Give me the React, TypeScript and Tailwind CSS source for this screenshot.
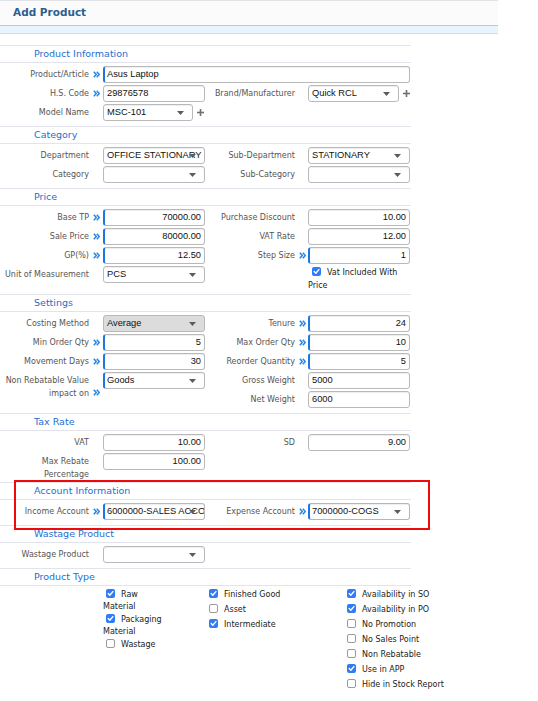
import React from "react";

const DJ = "font-['DejaVu_Sans',sans-serif]";
const LS = "font-['Liberation_Sans',Arial,sans-serif]";

function Tri() {
  return (
    <svg width="7" height="4" viewBox="0 0 7 4" className="absolute right-[8px] top-[6px]">
      <path d="M0 0H7L3.5 4Z" fill="#5c5c5c" />
    </svg>
  );
}

function Plus() {
  return (
    <svg width="7" height="7" viewBox="0 0 7 7" className="ml-[4px] mt-[5px] shrink-0">
      <rect x="2.7" y="0" width="1.6" height="7" fill="#707070" />
      <rect x="0" y="2.7" width="7" height="1.6" fill="#707070" />
    </svg>
  );
}

type FieldProps = {
  value?: string;
  right?: boolean;
  req?: boolean;
  select?: boolean;
  gray?: boolean;
  focus?: boolean;
  w?: string;
};

function Field({ value = "", right, req, select, gray, focus, w = "w-[102px]" }: FieldProps) {
  const cls = [
    "relative h-[17px] shrink-0 rounded-[3px] border flex items-center overflow-hidden whitespace-nowrap pr-[3px]",
    LS,
    "text-[9.3px] text-[#111]",
    w,
    focus ? "border-[#94bbea]" : "border-[#b9b9b9]",
    req ? "border-l-2 border-l-[#1b78e2] pl-[2px]" : "pl-[3px]",
    right ? "justify-end" : "justify-start",
    gray ? "bg-[#dcdcdc]" : "bg-white shadow-[inset_0_1px_1px_rgba(0,0,0,0.07)]",
  ].join(" ");
  return (
    <div className={cls}>
      <span>{value}</span>
      {select ? <Tri /> : null}
    </div>
  );
}

function Chev() {
  return (
    <svg width="7" height="7" viewBox="0 0 7 7" className="inline-block">
      <path d="M0.8 0.8L3.3 3.5L0.8 6.2M3.8 0.8L6.3 3.5L3.8 6.2" stroke="#2584e4" strokeWidth="1.5" fill="none" />
    </svg>
  );
}

function Row({
  label,
  req,
  right,
  chevLow,
  children,
}: {
  label: React.ReactNode;
  req?: boolean;
  right?: boolean;
  chevLow?: boolean;
  children: React.ReactNode;
}) {
  return (
    <div className="flex items-start">
      <div
        className={[
          right ? "w-[91px]" : "w-[90px]",
          "shrink-0 text-right pr-[1px] pt-[3px] leading-[12.5px] text-[8px] text-[#555]",
          DJ,
        ].join(" ")}
      >
        {label}
      </div>
      <div
        className={[
          right ? "w-[12px]" : "w-[13px]",
          "shrink-0 flex justify-center",
          chevLow ? "pt-[17px]" : "pt-[5px]",
        ].join(" ")}
      >
        {req ? <Chev /> : null}
      </div>
      {children}
    </div>
  );
}

function Section({
  title,
  children,
  body = "pt-[3px] pb-[5px]",
  top,
}: {
  title: string;
  children?: React.ReactNode;
  body?: string;
  top?: boolean;
}) {
  return (
    <div className={["border-b border-[#e3e3eb]", top ? "border-t" : ""].join(" ")}>
      <div
        className={[
          "h-[17px] border-b border-[#e3e3eb] pl-[34px] flex items-center text-[9.5px] text-[#1d6fd1]",
          DJ,
        ].join(" ")}
      >
        {title}
      </div>
      <div className={body}>{children}</div>
    </div>
  );
}

function Cols({ left, right }: { left: React.ReactNode; right?: React.ReactNode }) {
  return (
    <div className="flex">
      <div className="w-[205px] flex flex-col gap-[2px]">{left}</div>
      <div className="w-[205px] flex flex-col gap-[2px]">{right}</div>
    </div>
  );
}

function Box({ on }: { on?: boolean }) {
  return on ? (
    <span className="inline-flex align-middle relative top-[-1px] w-[9px] h-[9px] rounded-[2px] bg-[#2f7cf6] items-center justify-center">
      <svg width="7" height="7" viewBox="0 0 7 7">
        <path d="M1.2 3.6L2.8 5.2L5.9 1.6" stroke="white" strokeWidth="1.4" fill="none" strokeLinecap="round" strokeLinejoin="round" />
      </svg>
    </span>
  ) : (
    <span className="inline-block align-middle relative top-[-1px] w-[9px] h-[9px] rounded-[2px] border border-[#9a9a9a] bg-white" />
  );
}

function Check({ on, children, ml = "ml-[3px]" }: { on?: boolean; children: React.ReactNode; ml?: string }) {
  return (
    <div className="whitespace-nowrap">
      <span className={ml}>
        <Box on={on} />
      </span>
      <span className="ml-[6px]">{children}</span>
    </div>
  );
}

export default function App() {
  return (
    <div className="relative w-[538px] min-h-[701px] bg-white overflow-hidden">
      <div className="w-[498px]">
        <div className="h-[26px] border-t border-[#dfe3e6] border-b border-b-[#c2c8cc] bg-[#fbfbfb] flex items-center pl-[13px]">
          <span className={[DJ, "font-bold text-[10.5px] text-[#2e5e8e]"].join(" ")}>Add Product</span>
        </div>
        <div className="h-[8px] bg-[#e6f5fb] border-b border-[#d4dde1]" />
      </div>
      <div className="h-[11px]" />

      <div className="w-[411px]">
        <Section title="Product Information" top>
          <div className="flex flex-col gap-[2px]">
            <Row label="Product/Article" req>
              <Field value="Asus Laptop" req w="w-[307px]" />
            </Row>
            <Cols
              left={
                <>
                  <Row label="H.S. Code" req>
                    <Field value="29876578" />
                  </Row>
                  <Row label="Model Name">
                    <Field value="MSC-101" select w="w-[90px]" />
                    <Plus />
                  </Row>
                </>
              }
              right={
                <Row label="Brand/Manufacturer" right>
                  <Field value="Quick RCL" select w="w-[91px]" />
                  <Plus />
                </Row>
              }
            />
          </div>
        </Section>

        <Section title="Category">
          <Cols
            left={
              <>
                <Row label="Department">
                  <Field value="OFFICE STATIONARY" select />
                </Row>
                <Row label="Category">
                  <Field select />
                </Row>
              </>
            }
            right={
              <>
                <Row label="Sub-Department" right>
                  <Field value="STATIONARY" select />
                </Row>
                <Row label="Sub-Category" right>
                  <Field select />
                </Row>
              </>
            }
          />
        </Section>

        <Section title="Price" body="pt-[3px] pb-[2px]">
          <Cols
            left={
              <>
                <Row label="Base TP" req>
                  <Field value="70000.00" right req />
                </Row>
                <Row label="Sale Price" req>
                  <Field value="80000.00" right req />
                </Row>
                <Row label="GP(%)" req>
                  <Field value="12.50" right req />
                </Row>
                <Row label="Unit of Measurement">
                  <Field value="PCS" select />
                </Row>
              </>
            }
            right={
              <>
                <Row label="Purchase Discount" right>
                  <Field value="10.00" right />
                </Row>
                <Row label="VAT Rate" right>
                  <Field value="12.00" right />
                </Row>
                <Row label="Step Size" req right>
                  <Field value="1" right req />
                </Row>
                <div className="flex">
                  <div className="w-[103px] shrink-0" />
                  <div className={[DJ, "text-[8px] leading-[13px] text-[#222]"].join(" ")}>
                    <Check on ml="ml-[4px]">
                      Vat Included With
                    </Check>
                    <div>Price</div>
                  </div>
                </div>
              </>
            }
          />
        </Section>

        <Section title="Settings">
          <Cols
            left={
              <>
                <Row label="Costing Method">
                  <Field value="Average" select gray />
                </Row>
                <Row label="Min Order Qty" req>
                  <Field value="5" right req />
                </Row>
                <Row label="Movement Days" req>
                  <Field value="30" right req />
                </Row>
                <Row
                  label={
                    <>
                      Non Rebatable Value
                      <br />
                      impact on
                    </>
                  }
                  req
                  chevLow
                >
                  <Field value="Goods" select req />
                </Row>
              </>
            }
            right={
              <>
                <Row label="Tenure" req right>
                  <Field value="24" right req />
                </Row>
                <Row label="Max Order Qty" req right>
                  <Field value="10" right req />
                </Row>
                <Row label="Reorder Quantity" req right>
                  <Field value="5" right req />
                </Row>
                <Row label="Gross Weight" right>
                  <Field value="5000" />
                </Row>
                <Row label="Net Weight" right>
                  <Field value="6000" />
                </Row>
              </>
            }
          />
        </Section>

        <Section title="Tax Rate" body="pt-[3px] pb-[1px]">
          <Cols
            left={
              <>
                <Row label="VAT">
                  <Field value="10.00" right />
                </Row>
                <Row
                  label={
                    <>
                      Max Rebate
                      <br />
                      Percentage
                    </>
                  }
                >
                  <Field value="100.00" right />
                </Row>
              </>
            }
            right={
              <Row label="SD" right>
                <Field value="9.00" right />
              </Row>
            }
          />
        </Section>

        <Section title="Account Information">
          <Cols
            left={
              <Row label="Income Account" req>
                <Field value="6000000-SALES ACCOUNT" select req />
              </Row>
            }
            right={
              <Row label="Expense Account" req right>
                <Field value="7000000-COGS" select req focus />
              </Row>
            }
          />
        </Section>

        <Section title="Wastage Product">
          <Cols
            left={
              <Row label="Wastage Product">
                <Field select />
              </Row>
            }
          />
        </Section>

        <div>
          <div
            className={[
              "h-[17px] border-b border-[#e3e3eb] pl-[34px] flex items-center text-[9.5px] text-[#1d6fd1]",
              DJ,
            ].join(" ")}
          >
            Product Type
          </div>
          <div className={["flex pl-[103px] text-[8px] text-[#222]", DJ].join(" ")}>
            <div className="w-[103px] shrink-0 pt-[3px] leading-[12.4px]">
              <Check on>Raw</Check>
              <div>Material</div>
              <Check on>Packaging</Check>
              <div>Material</div>
              <Check>Wastage</Check>
            </div>
            <div className="w-[138px] shrink-0 pt-[1px] leading-[15px]">
              <Check on>Finished Good</Check>
              <Check>Asset</Check>
              <Check on>Intermediate</Check>
            </div>
            <div className="pt-[1px] leading-[15px]">
              <Check on>Availability in SO</Check>
              <Check on>Availability in PO</Check>
              <Check>No Promotion</Check>
              <Check>No Sales Point</Check>
              <Check>Non Rebatable</Check>
              <Check on>Use in APP</Check>
              <Check>Hide in Stock Report</Check>
            </div>
          </div>
        </div>
      </div>

      <div className="absolute left-[14px] top-[480px] w-[416px] h-[50px] border-2 border-[#ee0a0a] pointer-events-none" />
    </div>
  );
}
